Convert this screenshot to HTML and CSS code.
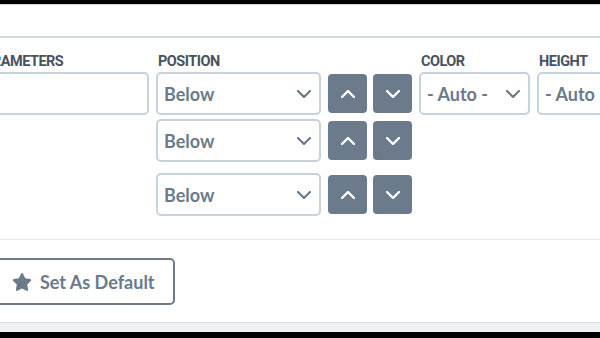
FILE: index.html
```html
<!DOCTYPE html>
<html lang="en">
<head>
  <meta charset="UTF-8">
  <meta name="viewport" content="width=device-width, initial-scale=1.0">
  <title>Layers</title>
  <link rel="stylesheet" href="styles.css">
</head>
<body>
  <div class="topbar"></div>
  <div class="header"></div>

  <section class="panel">
    <div class="fields">
      <!-- first row carries the labels -->
      <div class="row">
        <div class="field params">
          <label class="label" for="params">Parameters</label>
          <input id="params" class="input" type="text">
        </div>
        <div class="field position">
          <label class="label" for="pos1">Position</label>
          <div class="select">
            <select id="pos1"><option>Below</option><option>Above</option></select>
            <svg class="chev" viewBox="0 0 14 8"><path d="M1 1l6 6 6-6"/></svg>
          </div>
        </div>
        <button class="arrow" title="Move up"><svg viewBox="0 0 14 8"><path d="M1 7l6-6 6 6"/></svg></button>
        <button class="arrow" title="Move down"><svg viewBox="0 0 14 8"><path d="M1 1l6 6 6-6"/></svg></button>
        <div class="field color">
          <label class="label" for="color">Color</label>
          <div class="select">
            <select id="color"><option>- Auto -</option></select>
            <svg class="chev" viewBox="0 0 14 8"><path d="M1 1l6 6 6-6"/></svg>
          </div>
        </div>
        <div class="field height">
          <label class="label" for="height">Height</label>
          <div class="select">
            <select id="height"><option>- Auto -</option></select>
            <svg class="chev" viewBox="0 0 14 8"><path d="M1 1l6 6 6-6"/></svg>
          </div>
        </div>
      </div>

      <div class="row sub second">
        <div class="select position">
          <select><option>Below</option><option>Above</option></select>
          <svg class="chev" viewBox="0 0 14 8"><path d="M1 1l6 6 6-6"/></svg>
        </div>
        <button class="arrow" title="Move up"><svg viewBox="0 0 14 8"><path d="M1 7l6-6 6 6"/></svg></button>
        <button class="arrow" title="Move down"><svg viewBox="0 0 14 8"><path d="M1 1l6 6 6-6"/></svg></button>
      </div>

      <div class="row sub third">
        <div class="select position">
          <select><option>Below</option><option>Above</option></select>
          <svg class="chev" viewBox="0 0 14 8"><path d="M1 1l6 6 6-6"/></svg>
        </div>
        <button class="arrow" title="Move up"><svg viewBox="0 0 14 8"><path d="M1 7l6-6 6 6"/></svg></button>
        <button class="arrow" title="Move down"><svg viewBox="0 0 14 8"><path d="M1 1l6 6 6-6"/></svg></button>
      </div>
    </div>

    <div class="actions">
      <button class="btn-default">
        <svg class="star" viewBox="0 0 576 512"><path d="M316.9 18C311.6 7 300.4 0 288.1 0s-23.4 7-28.8 18L195 150.3 51.4 171.5c-12 1.8-22 10.2-25.7 21.7s-.7 24.2 7.9 32.7L137.8 329 113.2 474.7c-2 12 3 24.2 12.9 31.3s23 8 33.8 2.3l128.3-68.5 128.3 68.5c10.8 5.7 23.9 4.9 33.8-2.3s14.9-19.3 12.9-31.3L438.5 329 542.7 225.9c8.6-8.5 11.7-21.2 7.9-32.7s-13.7-19.9-25.7-21.7L381.2 150.3 316.9 18z"/></svg>
        Set As Default
      </button>
    </div>
  </section>

  <div class="footer"></div>
  <div class="bottombar"></div>
</body>
</html>
```

FILE: styles.css
```css
/* --- Base --- */
*{box-sizing:border-box;margin:0;padding:0}
html,body{height:338px;overflow:hidden}
body{font-family:"Lato","Open Sans",sans-serif;background:#fff;color:#6b7a89;width:600px}

/* --- Frame bars --- */
.topbar{height:4px;background:#000}
.header{height:32px;border-top:1px solid #d3d8dd}
.bottombar{height:7px;background:#000}
.footer{height:10px;border-top:1px solid #d3dbe2;background:#eef1f4}

/* --- Panel --- */
.panel{border-top:2px solid #cfd9e2}
.fields{padding:16px 0 23px;margin-left:-27px;border-bottom:1px solid #e3e8ec}
.row{display:flex;align-items:flex-end;gap:7px}
.row > *{flex:none}
.row.sub{padding-left:183px;align-items:center}
.row.second{margin-top:4px}
.row.third{margin-top:11px}
.row > .arrow{margin-bottom:2px}
.row.sub > .arrow{margin-bottom:0}
.arrow + .arrow{margin-left:-1px}

.field{display:flex;flex-direction:column;gap:2px}
.label{font-family:Roboto,sans-serif;font-weight:700;font-size:14.5px;line-height:16px;letter-spacing:-.5px;text-transform:uppercase;color:#48525d;padding-left:2px}

.params{width:176px}
.position{width:165px}
.color{width:111px}
.height{width:120px}

/* --- Inputs & selects --- */
.input,.select select{height:43px;width:100%;border:2px solid #c6d2dc;border-radius:5px;background:#fff;font:700 18px "Lato",sans-serif;color:#6b7a89;outline:none}
.input{padding:0 6px}
.select{position:relative}
.select select{appearance:none;-webkit-appearance:none;padding:0 30px 0 6px}
.chev{position:absolute;right:10px;top:18px;width:14px;height:8px;fill:none;stroke:#6b7a89;stroke-width:2.2;stroke-linecap:round;stroke-linejoin:round;pointer-events:none}

/* --- Arrow buttons --- */
.arrow{width:39px;height:39px;border:none;border-radius:4px;background:#6c7b8b;display:grid;place-items:center;cursor:pointer}
.arrow svg{width:14px;height:8px;fill:none;stroke:#fff;stroke-width:2.4;stroke-linecap:round;stroke-linejoin:round}

/* --- Actions --- */
.actions{padding:18px 0 17px}
.btn-default{margin-left:-8px;height:47px;display:inline-flex;align-items:center;gap:8px;padding:0 18px;border:2px solid #6d7b89;border-radius:5px;background:#fff;font:700 18px "Lato",sans-serif;color:#6b7a89;cursor:pointer}
.star{width:20px;height:18px;fill:#6b7a89}
```
